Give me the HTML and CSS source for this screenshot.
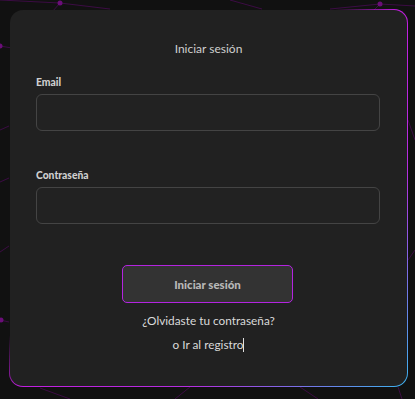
FILE: index.html
```html
<!DOCTYPE html>
<html lang="es">
<head>
  <meta charset="UTF-8">
  <meta name="viewport" content="width=device-width, initial-scale=1.0">
  <title>Iniciar sesión</title>
  <link rel="stylesheet" href="styles.css">
</head>
<body>
  <svg class="network" width="415" height="399" viewBox="0 0 415 399">
    <g stroke="#3c0c44" stroke-width="1" fill="none">
      <line x1="0" y1="0" x2="60" y2="3"/>
      <line x1="60" y1="3" x2="110" y2="9"/>
      <line x1="60" y1="3" x2="52" y2="12"/>
      <line x1="230" y1="0" x2="262" y2="9"/>
      <line x1="380" y1="4" x2="330" y2="9"/>
      <line x1="380" y1="4" x2="415" y2="6"/>
      <line x1="380" y1="4" x2="372" y2="12"/>
      <line x1="0" y1="46" x2="12" y2="48"/>
      <line x1="0" y1="130" x2="9" y2="126"/>
      <line x1="0" y1="182" x2="9" y2="178"/>
      <line x1="0" y1="252" x2="9" y2="246"/>
      <line x1="0" y1="320" x2="9" y2="322"/>
      <line x1="40" y1="388" x2="70" y2="399"/>
      <line x1="190" y1="387" x2="175" y2="399"/>
      <line x1="300" y1="387" x2="318" y2="399"/>
      <line x1="398" y1="387" x2="402" y2="399"/>
      <line x1="408" y1="120" x2="415" y2="140"/>
      <line x1="408" y1="260" x2="415" y2="250"/>
    </g>
    <g fill="#6a0e78">
      <circle cx="60" cy="3" r="2.5"/>
      <circle cx="380" cy="4" r="2.5"/>
      <circle cx="0" cy="46" r="2.5"/>
      <circle cx="1" cy="320" r="2.5"/>
    </g>
  </svg>

  <div class="login-card">
    <h2 class="login-title">Iniciar sesión</h2>

    <label class="field-label" for="email">Email</label>
    <input class="field-input" id="email" type="email">

    <label class="field-label field-label-second" for="password">Contraseña</label>
    <input class="field-input" id="password" type="password">

    <button class="login-button" type="button">Iniciar sesión</button>

    <p class="link-text">¿Olvidaste tu contraseña?</p>
    <p class="link-text link-register">o Ir al registro<span class="caret"></span></p>
  </div>
</body>
</html>
```

FILE: styles.css
```css
html, body {
  margin: 0;
  padding: 0;
}
body {
  position: relative;
  width: 415px;
  height: 399px;
  overflow: hidden;
  background-color: #111111;
  font-family: Lato, "Noto Sans", sans-serif;
  color: #d4d4d4;
}
.network {
  position: absolute;
  left: 0;
  top: 0;
}
.login-card {
  position: relative;
  box-sizing: border-box;
  width: 399px;
  height: 378px;
  margin: 9px 0 0 9px;
  padding: 31px 26px 0 26px;
  border: 1px solid transparent;
  border-radius: 14px;
  background:
    linear-gradient(#212121, #212121) padding-box,
    linear-gradient(135deg, rgba(190, 30, 220, 0) 42%, #c21ee0 50%, #b52ee0 72%, #3cb4f0 100%) border-box;
  display: flex;
  flex-direction: column;
}
.login-title {
  margin: 0;
  font-size: 12px;
  line-height: 15px;
  font-weight: normal;
  text-align: center;
  color: #cfcfcf;
}
.field-label {
  margin-top: 20px;
  font-size: 10.3px;
  line-height: 12px;
  font-weight: 900;
  color: #cfcfcf;
}
.field-label-second {
  margin-top: 38px;
}
.field-input {
  box-sizing: border-box;
  width: 344px;
  height: 37px;
  margin-top: 6px;
  border: 1px solid #444444;
  border-radius: 6px;
  background-color: #222222;
  color: #dddddd;
  outline: none;
}
.login-button {
  box-sizing: border-box;
  align-self: flex-start;
  width: 171px;
  height: 38px;
  margin: 41px 0 0 86px;
  border: 1px solid #b424e0;
  border-radius: 5px;
  background-color: #333333;
  color: #b8b8b8;
  font-family: inherit;
  font-size: 11.5px;
  font-weight: 900;
}
.link-text {
  margin: 11px 0 0 0;
  font-size: 11.8px;
  line-height: 14px;
  text-align: center;
  color: #dadada;
}
.link-register {
  margin-top: 10px;
}
.caret {
  display: inline-block;
  width: 1px;
  height: 14px;
  vertical-align: -3px;
  background-color: #e0e0e0;
}
```
